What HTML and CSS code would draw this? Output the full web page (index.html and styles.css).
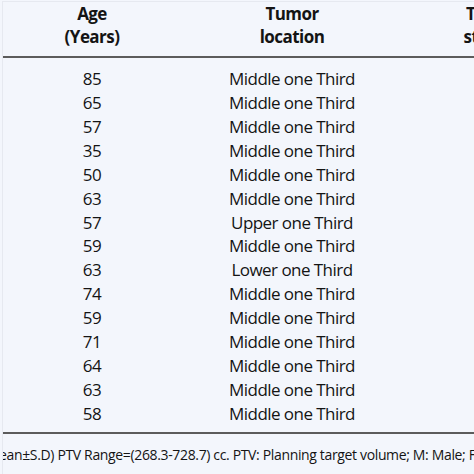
FILE: index.html
```html
<!DOCTYPE html>
<html>
<head>
<meta charset="utf-8">
<link rel="stylesheet" href="styles.css">
</head>
<body>
<div class="page">
  <div class="table">
    <div class="head">
      <div class="cell">Age<br>(Years)</div>
      <div class="cell">Tumor<br>location</div>
      <div class="cell">TNM<br>stage</div>
    </div>
    <div class="body">
      <div class="row"><div class="cell">85</div><div class="cell">Middle one Third</div><div class="cell"></div></div>
      <div class="row"><div class="cell">65</div><div class="cell">Middle one Third</div><div class="cell"></div></div>
      <div class="row"><div class="cell">57</div><div class="cell">Middle one Third</div><div class="cell"></div></div>
      <div class="row"><div class="cell">35</div><div class="cell">Middle one Third</div><div class="cell"></div></div>
      <div class="row"><div class="cell">50</div><div class="cell">Middle one Third</div><div class="cell"></div></div>
      <div class="row"><div class="cell">63</div><div class="cell">Middle one Third</div><div class="cell"></div></div>
      <div class="row"><div class="cell">57</div><div class="cell">Upper one Third</div><div class="cell"></div></div>
      <div class="row"><div class="cell">59</div><div class="cell">Middle one Third</div><div class="cell"></div></div>
      <div class="row"><div class="cell">63</div><div class="cell">Lower one Third</div><div class="cell"></div></div>
      <div class="row"><div class="cell">74</div><div class="cell">Middle one Third</div><div class="cell"></div></div>
      <div class="row"><div class="cell">59</div><div class="cell">Middle one Third</div><div class="cell"></div></div>
      <div class="row"><div class="cell">71</div><div class="cell">Middle one Third</div><div class="cell"></div></div>
      <div class="row"><div class="cell">64</div><div class="cell">Middle one Third</div><div class="cell"></div></div>
      <div class="row"><div class="cell">63</div><div class="cell">Middle one Third</div><div class="cell"></div></div>
      <div class="row"><div class="cell">58</div><div class="cell">Middle one Third</div><div class="cell"></div></div>
    </div>
  </div>
  <p class="note">(Mean±S.D) PTV Range=(268.3-728.7) cc. PTV: Planning target volume; M: Male; F: Female</p>
</div>
</body>
</html>
```
FILE: styles.css
```css
html, body {
  margin: 0;
  padding: 0;
  background: #f3f6fc;
}
body {
  width: 474px;
  height: 474px;
  overflow: hidden;
  font-family: "Open Sans", "Noto Sans", sans-serif;
  color: #141414;
}
.page {
  height: 472px;
  border-top: 1px solid #e6e9f0;
  border-left: 1px solid #e6e9f0;
  margin: 1px 0 0 2px;
  overflow: hidden;
}
.table {
  width: 570px;
  margin-left: -3px;
}
.head, .row {
  display: grid;
  grid-template-columns: 184px 216px 170px;
}
.head {
  font-weight: 700;
  font-size: 17px;
  line-height: 23px;
  letter-spacing: -0.55px;
  padding-bottom: 8px;
  border-bottom: 2px solid #5c5c5c;
}
.cell {
  text-align: center;
  white-space: nowrap;
}
.body {
  padding: 9px 0 6px;
  border-bottom: 2px solid #5c5c5c;
  font-size: 17px;
  letter-spacing: -0.55px;
}
.row {
  height: 23.93px;
  line-height: 23.93px;
}
.note {
  margin: 11px 0 0 -20px;
  font-size: 14px;
  letter-spacing: -0.35px;
  white-space: nowrap;
  line-height: 20px;
}
```
